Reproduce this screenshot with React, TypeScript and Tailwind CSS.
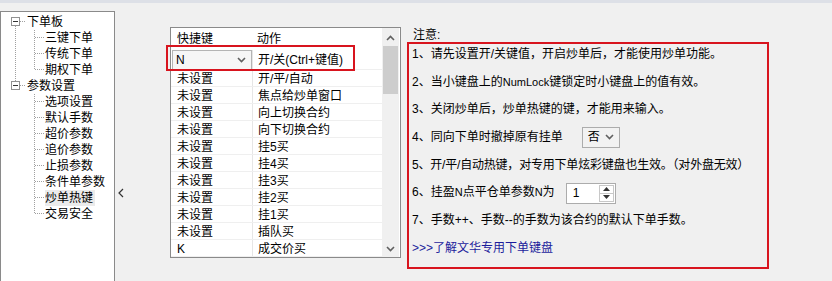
import React from "react";

const TREE = [
  { title: '下单板', children: ['三键下单', '传统下单', '期权下单'] },
  { title: '参数设置', children: ['选项设置', '默认手数', '超价参数', '追价参数', '止损参数', '条件单参数', '炒单热键', '交易安全'] },
];

const ROWS = [
  ['未设置', '开/平/自动'],
  ['未设置', '焦点给炒单窗口'],
  ['未设置', '向上切换合约'],
  ['未设置', '向下切换合约'],
  ['未设置', '挂5买'],
  ['未设置', '挂4买'],
  ['未设置', '挂3买'],
  ['未设置', '挂2买'],
  ['未设置', '挂1买'],
  ['未设置', '插队买'],
  ['K', '成交价买'],
];

const DOT = '#a0a0a0';

// connector for a top level node, with its [-] box
function RootGlyph({ first, last }: { first: boolean; last: boolean }) {
  return (
    <svg width="25" height="16" className="shrink-0" shapeRendering="crispEdges">
      {!first && <line x1="14.5" y1="0" x2="14.5" y2="3" stroke={DOT} strokeDasharray="1 1" />}
      {!last && <line x1="14.5" y1="12" x2="14.5" y2="16" stroke={DOT} strokeDasharray="1 1" />}
      <line x1="19" y1="7.5" x2="25" y2="7.5" stroke={DOT} strokeDasharray="1 1" />
      <rect x="10.5" y="3.5" width="8" height="8" fill="#fff" stroke="#919191" />
      <line x1="12" y1="7.5" x2="17" y2="7.5" stroke="#333" />
    </svg>
  );
}

function ChildGlyph({ through, lastChild }: { through: boolean; lastChild: boolean }) {
  return (
    <svg width="44" height="16" className="shrink-0" shapeRendering="crispEdges">
      {through && <line x1="14.5" y1="0" x2="14.5" y2="16" stroke={DOT} strokeDasharray="1 1" />}
      <line x1="33.5" y1="0" x2="33.5" y2={lastChild ? 8 : 16} stroke={DOT} strokeDasharray="1 1" />
      <line x1="34" y1="7.5" x2="43" y2="7.5" stroke={DOT} strokeDasharray="1 1" />
    </svg>
  );
}

function Chevron({ up }: { up?: boolean }) {
  return (
    <svg width="9" height="6" viewBox="0 0 9 6">
      <polyline points={up ? '1,5 4.5,1.5 8,5' : '1,1 4.5,4.5 8,1'} fill="none" stroke="#606060" strokeWidth="1.6" />
    </svg>
  );
}

export default function App() {
  return (
    <div className="w-[832px] h-[281px] overflow-hidden bg-[#f0f0f0] text-[12px] text-black font-['Liberation_Sans','Noto_Sans_CJK_SC',sans-serif]">
      <div className="h-[3px] bg-[#dde0e7]" />
      <div className="flex h-[278px]">
        {/* tree */}
        <div className="mt-[8px] w-[115px] h-[280px] shrink-0 bg-white border-l border-t border-r border-[#8a8a8a] pt-[2px]">
          {TREE.map((g, gi) => (
            <div key={g.title}>
              <div className="flex items-center h-[16px] leading-[16px]">
                <RootGlyph first={gi === 0} last={gi === TREE.length - 1} />
                <span className="ml-px">{g.title}</span>
              </div>
              {g.children.map((c, ci) => (
                <div key={c} className="flex items-center h-[16px] leading-[16px]">
                  <ChildGlyph through={gi < TREE.length - 1} lastChild={ci === g.children.length - 1} />
                  <span className={c === '炒单热键' ? 'bg-[#ebebeb] pr-[2px]' : ''}>{c}</span>
                </div>
              ))}
            </div>
          ))}
        </div>

        {/* splitter */}
        <div className="w-[55px] shrink-0 pt-[185px] pl-[3px]">
          <svg width="6" height="10" viewBox="0 0 6 10">
            <polyline points="5,1 1,5 5,9" fill="none" stroke="#333" strokeWidth="1.2" />
          </svg>
        </div>

        {/* hotkey table */}
        <div className="relative mt-[24px] w-[231px] h-[231px] shrink-0 bg-white border border-[#8a8a8a] flex">
          <div className="w-[211px]">
            <div className="flex h-[22px] items-center">
              <div className="w-[81px] pl-[6px]">快捷键</div>
              <div className="pl-[5px]">动作</div>
            </div>
            <div className="flex h-[20px] items-center border-b border-[#efefef]">
              <div className="ml-px w-[80px] h-[20px] border border-[#b4b4b4] bg-[#f6f6f6] flex items-center justify-between pl-[3px] pr-[5px]">
                <span>N</span>
                <Chevron />
              </div>
              <div className="pl-[5px] border-l border-[#e6e6e6] h-full flex items-center">开/关(Ctrl+键值)</div>
            </div>
            {ROWS.map((r, i) => (
              <div key={i} className="flex h-[17px] leading-[18px] border-b border-[#efefef]">
                <div className="w-[81px] pl-[6px]">{r[0]}</div>
                <div className="pl-[5px] border-l border-[#e6e6e6]">{r[1]}</div>
              </div>
            ))}
          </div>
          <div className="w-[17px] bg-[#f0f0f0] flex flex-col">
            <div className="h-[17px] flex items-center justify-center pt-[2px]"><Chevron up /></div>
            <div className="mx-[1px] mt-[1px] h-[48px] bg-[#cdcdcd]" />
            <div className="flex-1" />
            <div className="h-[17px] flex items-center justify-center"><Chevron /></div>
          </div>
          <div className="absolute left-[-5px] top-[17px] w-[189px] h-[26px] border-2 border-[#d8141e]" />
        </div>

        {/* notes */}
        <div className="ml-[6px] pt-[25px]">
          <div className="h-[14px] leading-[14px] pl-[6px]">注意:</div>
          <div className="w-[362px] h-[227px] border-2 border-[#d8141e] pl-[3px] flex flex-col gap-[7.7px]">
            <div className="h-[20px] leading-[20px]">1、请先设置开/关键值，开启炒单后，才能使用炒单功能。</div>
            <div className="h-[20px] leading-[20px]">2、当小键盘上的<span className="text-[11px]">NumLock</span>键锁定时小键盘上的值有效。</div>
            <div className="h-[20px] leading-[20px]">3、关闭炒单后，炒单热键的键，才能用来输入。</div>
            <div className="h-[20px] flex items-center">
              <span>4、同向下单时撤掉原有挂单</span>
              <div className="ml-[19px] w-[38px] h-[21px] bg-[#f2f2f2] border border-[#acacac] flex items-center justify-between pl-[5px] pr-[5px]">
                <span>否</span>
                <Chevron />
              </div>
            </div>
            <div className="h-[20px] leading-[20px] tracking-[-0.2px]">5、开/平/自动热键，对专用下单炫彩键盘也生效。（对外盘无效）</div>
            <div className="h-[20px] flex items-center">
              <span>6、挂盈<span className="text-[11px]">N</span>点平仓单参数<span className="text-[11px]">N</span>为</span>
              <div className="ml-[11px] w-[50px] h-[21px] mt-[2px] bg-white border border-[#acacac] flex items-center justify-between pl-[6px] pr-px">
                <span>1</span>
                <div className="flex flex-col w-[15px] h-[17px] border border-[#c8c8c8]">
                  <div className="flex-1 flex items-center justify-center border-b border-[#c8c8c8]">
                    <svg width="7" height="4"><polygon points="0,4 3.5,0 7,4" fill="#333" /></svg>
                  </div>
                  <div className="flex-1 flex items-center justify-center">
                    <svg width="7" height="4"><polygon points="0,0 3.5,4 7,0" fill="#333" /></svg>
                  </div>
                </div>
              </div>
            </div>
            <div className="h-[20px] leading-[20px]">7、手数++、手数--的手数为该合约的默认下单手数。</div>
            <div className="h-[20px] leading-[20px] text-[#1c1c9c]">&gt;&gt;&gt;了解文华专用下单键盘</div>
          </div>
        </div>
      </div>
    </div>
  );
}
